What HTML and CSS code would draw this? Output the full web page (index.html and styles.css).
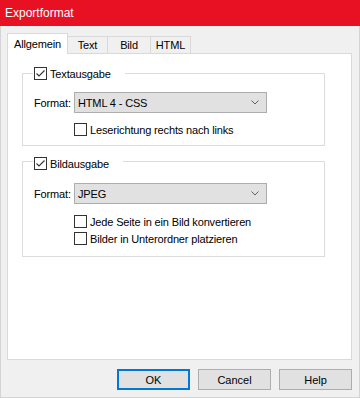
FILE: index.html
```html
<!DOCTYPE html>
<html lang="de">
<head>
    <meta charset="UTF-8">
    <meta name="viewport" content="width=device-width, initial-scale=1.0">
    <title>Exportformat</title>
    <link rel="stylesheet" href="styles.css">
</head>
<body>
    <div class="window">
        <div class="titlebar">Exportformat</div>

        <div class="client">
            <!-- Tabs -->
            <div class="tabs">
                <div class="tab tab-active tab-general">Allgemein</div>
                <div class="tab tab-text">Text</div>
                <div class="tab tab-image">Bild</div>
                <div class="tab tab-html">HTML</div>
            </div>

            <div class="tab-panel">
                <!-- Text output -->
                <div class="group">
                    <div class="group-legend">
                        <span class="checkbox">
                            <svg width="11" height="11" viewBox="0 0 11 11"><polyline points="1.5,5.5 4,8 9.5,2.5" fill="none" stroke="#333" stroke-width="1.1"/></svg>
                        </span>
                        <span>Textausgabe</span>
                    </div>
                    <div class="field-row">
                        <span class="field-label">Format:</span>
                        <div class="select">
                            <span>HTML 4 - CSS</span>
                            <svg width="8" height="5" viewBox="0 0 8 5"><polyline points="0.5,0.5 4,4 7.5,0.5" fill="none" stroke="#606060" stroke-width="1"/></svg>
                        </div>
                    </div>
                    <div class="options">
                        <div class="option"><span class="checkbox"></span><span>Leserichtung rechts nach links</span></div>
                    </div>
                </div>

                <!-- Image output -->
                <div class="group group-image">
                    <div class="group-legend">
                        <span class="checkbox">
                            <svg width="11" height="11" viewBox="0 0 11 11"><polyline points="1.5,5.5 4,8 9.5,2.5" fill="none" stroke="#333" stroke-width="1.1"/></svg>
                        </span>
                        <span>Bildausgabe</span>
                    </div>
                    <div class="field-row">
                        <span class="field-label">Format:</span>
                        <div class="select">
                            <span>JPEG</span>
                            <svg width="8" height="5" viewBox="0 0 8 5"><polyline points="0.5,0.5 4,4 7.5,0.5" fill="none" stroke="#606060" stroke-width="1"/></svg>
                        </div>
                    </div>
                    <div class="options">
                        <div class="option"><span class="checkbox"></span><span>Jede Seite in ein Bild konvertieren</span></div>
                        <div class="option"><span class="checkbox"></span><span>Bilder in Unterordner platzieren</span></div>
                    </div>
                </div>
            </div>

            <!-- Dialog buttons -->
            <div class="buttons">
                <button class="button button-default">OK</button>
                <button class="button">Cancel</button>
                <button class="button">Help</button>
            </div>
        </div>
    </div>
</body>
</html>
```

FILE: styles.css
```css
* {
    box-sizing: border-box;
}
body {
    margin: 0;
    font-family: "Liberation Sans", Arial, sans-serif;
    font-size: 11px;
    letter-spacing: -0.15px;
    color: #000;
    background: #f0f0f0;
}
.window {
    width: 360px;
    height: 398px;
    display: flex;
    flex-direction: column;
}
.titlebar {
    flex: none;
    height: 26px;
    line-height: 26px;
    padding-left: 5px;
    background: #e81123;
    color: white;
    font-size: 12px;
    letter-spacing: 0;
}
.client {
    flex: 1;
    border: 1px solid #d4d4d4;
    border-top: none;
    padding: 7px 7px 0 6px;
}

/* tabs */
.tabs {
    display: flex;
    align-items: flex-end;
    height: 20px;
}
.tab {
    height: 17px;
    margin-left: -1px;
    border: 1px solid #d9d9d9;
    border-bottom: none;
    background: #f0f0f0;
    display: flex;
    align-items: center;
    justify-content: center;
}
.tab:first-child {
    margin-left: 0;
}
.tab-active {
    height: 21px;
    margin-bottom: -1px;
    background: white;
    position: relative;
    z-index: 1;
}
.tab-general { width: 61px; }
.tab-text { width: 41px; }
.tab-image { width: 44px; }
.tab-html { width: 41px; }

.tab-panel {
    height: 307px;
    background: white;
    border: 1px solid #d9d9d9;
    padding: 19px 26px 0 14px;
}

/* group boxes */
.group {
    border: 1px solid #dcdcdc;
    padding: 0 0 9px 11px;
}
.group-legend {
    display: flex;
    align-items: center;
    gap: 3px;
    width: fit-content;
    height: 13px;
    margin: -7px 0 0 -1px;
    padding: 0 14px 0 1px;
    background: white;
}
.field-row {
    display: flex;
    align-items: center;
    margin-top: 12px;
}
.field-label {
    width: 40px;
}
.select {
    width: 193px;
    height: 21px;
    border: 1px solid #adadad;
    background: #e1e1e1;
    display: flex;
    align-items: center;
    justify-content: space-between;
    padding: 0 7px 0 3px;
}
.options {
    display: flex;
    flex-direction: column;
    gap: 4px;
    margin: 10px 0 0 40px;
}
.option {
    display: flex;
    align-items: center;
    gap: 3px;
    height: 13px;
}
.checkbox {
    flex: none;
    width: 13px;
    height: 13px;
    border: 1px solid #333;
    background: white;
    display: flex;
}

.group-image {
    margin-top: 15px;
    padding-bottom: 11px;
}
.group-image .group-legend {
    margin-top: -5px;
}
.group-image .field-row {
    margin-top: 13px;
}
.group-image .options {
    margin-top: 11px;
}

/* buttons */
.buttons {
    display: flex;
    justify-content: flex-end;
    gap: 8px;
    margin-top: 9px;
}
.button {
    width: 73px;
    height: 21px;
    padding: 0;
    border: 1px solid #adadad;
    background: #e1e1e1;
    font: inherit;
    color: #000;
}
.button-default {
    border: 2px solid #0078d7;
}
```
